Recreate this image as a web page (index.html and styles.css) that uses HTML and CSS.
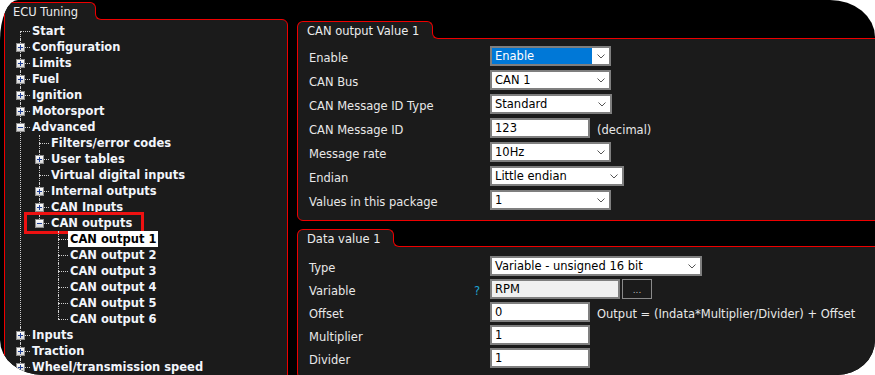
FILE: index.html
```html
<!DOCTYPE html>
<html lang="en">
<head>
  <meta charset="UTF-8">
  <title>ECU Tuning - CAN outputs</title>
  <link rel="stylesheet" href="styles.css">
</head>
<body>

  <div class="window">

    <!-- Left: tuning tree -->
    <div class="left">
      <div class="tab tab-ecu">ECU Tuning</div>
      <div class="panel tree-panel">
        <ul class="tree root">
          <li><span class="label">Start</span></li>
          <li><span class="exp"></span><span class="label">Configuration</span></li>
          <li><span class="exp"></span><span class="label">Limits</span></li>
          <li><span class="exp"></span><span class="label">Fuel</span></li>
          <li><span class="exp"></span><span class="label">Ignition</span></li>
          <li><span class="exp"></span><span class="label">Motorsport</span></li>
          <li><span class="exp minus"></span><span class="label">Advanced</span>
            <ul class="tree">
              <li><span class="label">Filters/error codes</span></li>
              <li><span class="exp"></span><span class="label">User tables</span></li>
              <li><span class="label">Virtual digital inputs</span></li>
              <li><span class="exp"></span><span class="label">Internal outputs</span></li>
              <li><span class="exp"></span><span class="label">CAN Inputs</span></li>
              <li><span class="exp minus"></span><span class="label">CAN outputs</span><span class="mark"></span>
                <ul class="tree">
                  <li><span class="label selected">CAN output 1</span></li>
                  <li><span class="label">CAN output 2</span></li>
                  <li><span class="label">CAN output 3</span></li>
                  <li><span class="label">CAN output 4</span></li>
                  <li><span class="label">CAN output 5</span></li>
                  <li><span class="label">CAN output 6</span></li>
                </ul>
              </li>
            </ul>
          </li>
          <li><span class="exp"></span><span class="label">Inputs</span></li>
          <li><span class="exp"></span><span class="label">Traction</span></li>
          <li><span class="exp"></span><span class="label">Wheel/transmission speed</span></li>
        </ul>
      </div>
    </div>

    <!-- Right: settings groups -->
    <div class="right">

      <div class="tab tab-value">CAN output Value 1</div>
      <div class="panel form">
        <span class="lbl">Enable</span>
        <div class="ctl sel w121 hl"><span class="val">Enable</span><span class="chev"><svg width="8" height="5" viewBox="0 0 8 5"><polyline points="0.5,0.5 4,4 7.5,0.5" fill="none" stroke="#555"/></svg></span></div>

        <span class="lbl">CAN Bus</span>
        <div class="ctl sel w121"><span class="val">CAN 1</span><span class="chev"><svg width="8" height="5" viewBox="0 0 8 5"><polyline points="0.5,0.5 4,4 7.5,0.5" fill="none" stroke="#555"/></svg></span></div>

        <span class="lbl">CAN Message ID Type</span>
        <div class="ctl sel w122"><span class="val">Standard</span><span class="chev"><svg width="8" height="5" viewBox="0 0 8 5"><polyline points="0.5,0.5 4,4 7.5,0.5" fill="none" stroke="#555"/></svg></span></div>

        <span class="lbl">CAN Message ID</span>
        <div class="cell"><div class="ctl w100"><span class="val">123</span></div><span class="note">(decimal)</span></div>

        <span class="lbl">Message rate</span>
        <div class="ctl sel w121"><span class="val">10Hz</span><span class="chev"><svg width="8" height="5" viewBox="0 0 8 5"><polyline points="0.5,0.5 4,4 7.5,0.5" fill="none" stroke="#555"/></svg></span></div>

        <span class="lbl">Endian</span>
        <div class="ctl sel w134"><span class="val">Little endian</span><span class="chev"><svg width="8" height="5" viewBox="0 0 8 5"><polyline points="0.5,0.5 4,4 7.5,0.5" fill="none" stroke="#555"/></svg></span></div>

        <span class="lbl">Values in this package</span>
        <div class="ctl sel w121"><span class="val">1</span><span class="chev"><svg width="8" height="5" viewBox="0 0 8 5"><polyline points="0.5,0.5 4,4 7.5,0.5" fill="none" stroke="#555"/></svg></span></div>
      </div>

      <div class="tab tab-data">Data value 1</div>
      <div class="panel form tight">
        <span class="lbl">Type</span>
        <div class="ctl sel w212"><span class="val">Variable - unsigned 16 bit</span><span class="chev"><svg width="8" height="5" viewBox="0 0 8 5"><polyline points="0.5,0.5 4,4 7.5,0.5" fill="none" stroke="#555"/></svg></span></div>

        <span class="lbl help">Variable<span class="q">?</span></span>
        <div class="cell"><div class="ctl w130 readonly"><span class="val">RPM</span></div><span class="btn">...</span></div>

        <span class="lbl">Offset</span>
        <div class="cell"><div class="ctl w100"><span class="val">0</span></div><span class="note">Output = (Indata*Multiplier/Divider) + Offset</span></div>

        <span class="lbl">Multiplier</span>
        <div class="ctl w100"><span class="val">1</span></div>

        <span class="lbl">Divider</span>
        <div class="ctl w100"><span class="val">1</span></div>
      </div>

    </div>
  </div>

</body>
</html>
```

FILE: styles.css
```css
/* Basic setup */
body {
  margin: 0;
  background: #fff;
  font-family: "DejaVu Sans", Verdana, sans-serif;
  font-size: 11.5px;
}

/* Window with rounded screenshot corners */
.window {
  width: 875px;
  height: 375px;
  background: #000;
  display: flex;
  align-items: flex-start;
  overflow: hidden;
  border-radius: 18px 45px 38px 43px / 40px 37px 35px 35px;
}

.left {
  flex: none;
  width: 284px;
  margin: 2px 0 0 4px;
}

.right {
  flex: none;
  width: 620px;
  margin: 21px 0 0 9px;
}

/* Tabs sit on top of the panel border */
.tab {
  position: relative;
  z-index: 1;
  box-sizing: border-box;
  height: 18px;
  margin-bottom: -1px;
  padding: 1px 0 0 9px;
  line-height: 16px;
  color: #ececec;
  background: #1b1b1b;
  border: 1px solid #e00;
  border-bottom: 0;
  border-radius: 6px 6px 0 0;
  white-space: nowrap;
}
/* concave corner where the tab meets the panel top */
.tab:before {
  content: "";
  position: absolute;
  left: 100%;
  bottom: 0;
  width: 6px;
  height: 6px;
  background: #1b1b1b;
}
.tab:after {
  content: "";
  position: absolute;
  left: 100%;
  bottom: 0;
  width: 7px;
  height: 7px;
  box-sizing: border-box;
  background: #000;
  border-left: 1px solid #e00;
  border-bottom: 1px solid #e00;
  border-bottom-left-radius: 6px;
}
.tab-ecu { width: 92px; padding-left: 8px; }
.tab-value { width: 136px; }
.tab-data { width: 97px; margin-top: 8px; }

.panel {
  background: #1b1b1b;
  border: 1px solid #e00;
  border-radius: 0 0 0 6px;
}

/* Tree */
.tree-panel {
  height: 380px;
  padding: 3px 0 0 15px;
  border-radius: 0 6px 6px 6px;
}

.tree {
  list-style: none;
  margin: 0;
  padding: 0;
}
.tree .tree {
  margin-left: 7px;
}
.tree li {
  position: relative;
  padding-left: 12px;
  line-height: 16px;
  font-weight: bold;
  color: #f2f5fb;
  white-space: nowrap;
}
.tree li:before {
  content: "";
  position: absolute;
  left: 0;
  top: 8px;
  width: 10px;
  border-top: 1px dotted #cfcfcf;
}
.tree li:after {
  content: "";
  position: absolute;
  left: 0;
  top: 0;
  bottom: 0;
  border-left: 1px dotted #cfcfcf;
}
.tree li:last-child:after {
  bottom: auto;
  height: 8px;
}
.root > li:first-child:after {
  top: 8px;
}

.label {
  display: inline-block;
  padding: 0 2px;
  margin-left: -2px;
}
.selected {
  background: #fff;
  color: #000;
}

/* +/- expander boxes */
.exp {
  position: absolute;
  z-index: 1;
  left: -4px;
  top: 4px;
  width: 9px;
  height: 9px;
  box-sizing: border-box;
  border: 1px solid #8e8e8e;
  background:
    linear-gradient(#1f3f96, #1f3f96) 1px 3px / 5px 1px no-repeat,
    linear-gradient(#1f3f96, #1f3f96) 3px 1px / 1px 5px no-repeat,
    linear-gradient(#fff, #d6d6d6);
}
.exp.minus {
  background:
    linear-gradient(#1f3f96, #1f3f96) 1px 3px / 5px 1px no-repeat,
    linear-gradient(#fff, #d6d6d6);
}

/* red annotation box */
.mark {
  position: absolute;
  left: -15px;
  top: -3px;
  width: 120px;
  height: 22px;
  box-sizing: border-box;
  border: 3px solid #ee1111;
}

/* Forms */
.form {
  display: grid;
  grid-template-columns: 181px 1fr;
  row-gap: 4px;
  align-items: center;
  padding: 7px 0 10px 11px;
}
.form.tight {
  row-gap: 3px;
  padding-top: 9px;
}

.lbl {
  padding-top: 4px;
  color: #e8e8e8;
}
.lbl.help {
  display: flex;
  justify-content: space-between;
  padding-right: 10px;
}
.q {
  color: #1fa3d4;
}

.cell {
  display: flex;
  align-items: center;
}

.ctl {
  box-sizing: border-box;
  height: 20px;
  display: flex;
  align-items: stretch;
  background: #fff;
  color: #000;
  border: 2px solid #7f7f7f;
}
.ctl .val {
  flex: 1;
  display: flex;
  align-items: center;
  padding-left: 3px;
  white-space: nowrap;
}
.hl .val {
  background: #0078d7;
  color: #fff;
}
.chev {
  flex: none;
  width: 17px;
  display: flex;
  align-items: center;
  justify-content: center;
}
.readonly {
  background: #f0f0f0;
}

.w100 { width: 100px; }
.w121 { width: 121px; }
.w122 { width: 122px; }
.w130 { width: 130px; }
.w134 { width: 134px; }
.w212 { width: 212px; }

.note {
  margin-left: 7px;
  padding-top: 3px;
  color: #e8e8e8;
  white-space: nowrap;
}

.btn {
  box-sizing: border-box;
  width: 30px;
  height: 20px;
  margin-left: 2px;
  border: 1px solid #8a8a8a;
  color: #bbb;
  font-size: 9px;
  line-height: 20px;
  text-align: center;
}
```
